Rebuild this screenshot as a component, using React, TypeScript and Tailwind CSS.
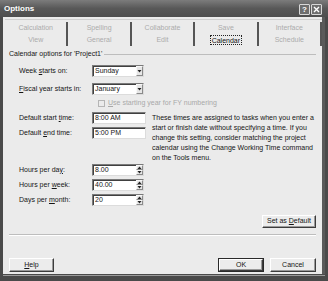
import React from "react"

const field =
  "bg-white border border-t-[#7a7a7a] border-l-[#7a7a7a] border-r-[#dcdcdc] border-b-[#dcdcdc] shadow-[inset_1px_1px_0_#404040]"
const raised =
  "bg-[#ececec] border border-t-white border-l-white border-r-[#3c3c3c] border-b-[#3c3c3c] shadow-[inset_-1px_-1px_0_#9a9a9a]"
const small = "bg-[#e6e6e6] border border-t-[#f8f8f8] border-l-[#f8f8f8] border-r-[#8a8a8a] border-b-[#8a8a8a]"

const Arrow = ({ up = false }: { up?: boolean }) => (
  <svg width="5" height="3" viewBox="0 0 5 3">
    <path d={up ? "M0.5 3 L2.5 0.5 L4.5 3 Z" : "M0.5 0 L4.5 0 L2.5 2.5 Z"} fill="#222" />
  </svg>
)

const Dropdown = ({ value }: { value: string }) => (
  <div className={`${field} w-[52px] h-[12px] flex items-center justify-between pl-[2px]`}>
    <span>{value}</span>
    <div className={`${small} w-[7px] h-[10px] flex items-center justify-center`}>
      <Arrow />
    </div>
  </div>
)

const Spin = ({ value }: { value: string }) => (
  <div className={`${field} w-[52px] h-[12px] flex items-center justify-between pl-[2px]`}>
    <span>{value}</span>
    <div className="w-[7px] h-[10px] flex flex-col">
      <div className={`${small} flex-1 flex items-center justify-center`}>
        <Arrow up />
      </div>
      <div className={`${small} flex-1 flex items-center justify-center`}>
        <Arrow />
      </div>
    </div>
  </div>
)

const tabs = [
  ["Calculation", "View"],
  ["Spelling", "General"],
  ["Collaborate", "Edit"],
  ["Save", "Calendar"],
  ["Interface", "Schedule"],
]

export default function App() {
  return (
    <div className="w-[328px] h-[281px] bg-[#4a4a4a] flex flex-col font-['Liberation_Sans',Arial,sans-serif] text-[7px] text-[#151515] overflow-hidden">
      {/* title bar */}
      <div className="h-[17px] shrink-0 flex items-center justify-between pl-[4px] pr-[6px] bg-gradient-to-b from-[#7c7c7c] via-[#585858] to-[#4e4e4e]">
        <span className="text-white text-[8px] font-semibold">Options</span>
        <div className="flex gap-[1px] mt-[2px]">
          <div className="w-[11px] h-[11px] border border-[#d8d8d8] bg-[#6e6e6e] rounded-[1px] flex items-center justify-center text-white text-[8px] font-bold leading-none">
            ?
          </div>
          <div className="w-[11px] h-[11px] border border-[#d8d8d8] bg-[#6e6e6e] rounded-[1px] flex items-center justify-center">
            <svg width="7" height="7" viewBox="0 0 7 7">
              <path d="M1 1 L6 6 M6 1 L1 6" stroke="#fff" strokeWidth="1.4" />
            </svg>
          </div>
        </div>
      </div>

      {/* dialog body */}
      <div className="h-[257px] shrink-0 mx-[3px] bg-[#ebebeb] border-r-[3px] border-[#5a5a5a] flex flex-col">
        {/* tabs */}
        <div className="ml-[2px] mt-[2px] w-[317px] border-t border-[#cfcfcf] pt-[2px] grid grid-cols-5">
          {tabs.map(([top, bottom]) => (
            <div key={top} className="flex flex-col border-r-2 border-[#555]">
              <div className="h-[12px] flex items-center justify-center text-[#ababab]">{top}</div>
              <div className="h-[12px] flex items-center justify-center">
                {bottom === "Calendar" ? (
                  <span className="px-[1px] h-[10px] leading-[9px] border border-dotted border-[#222] text-[#111]">
                    {bottom}
                  </span>
                ) : (
                  <span className="text-[#ababab]">{bottom}</span>
                )}
              </div>
            </div>
          ))}
        </div>

        {/* panel */}
        <div className="flex flex-col pl-[6px] pr-[6px]">
          <div className="h-[10px] mt-[3px] flex items-center">
            <span>Calendar options for 'Project1'</span>
            <div className="flex-1 ml-[2px] border-t border-[#bdbdbd]" />
          </div>

          <div className="pl-[10px] flex flex-col">
            <div className="mt-[6px] flex items-center">
              <span className="w-[73px]">
                Week <u>s</u>tarts on:
              </span>
              <Dropdown value="Sunday" />
            </div>
            <div className="mt-[6px] flex items-center">
              <span className="w-[73px]">
                <u>F</u>iscal year starts in:
              </span>
              <Dropdown value="January" />
            </div>
            <div className="mt-[4px] h-[8px] flex items-center pl-[79px] text-[#a9a9a9]">
              <div className="w-[7px] h-[7px] border border-[#b5b5b5] bg-[#ebebeb] mr-[3px]" />
              <span>
                <u>U</u>se starting year for FY numbering
              </span>
            </div>

            <div className="mt-[5px] flex items-start">
              <div className="flex flex-col">
                <div className="flex items-center">
                  <span className="w-[73px]">
                    Default start <u>t</u>ime:
                  </span>
                  <div className={`${field} w-[54px] h-[12px] flex items-center pl-[2px]`}>8:00 AM</div>
                </div>
                <div className="mt-[3px] flex items-center">
                  <span className="w-[73px]">
                    Default <u>e</u>nd time:
                  </span>
                  <div className={`${field} w-[54px] h-[12px] flex items-center pl-[2px]`}>5:00 PM</div>
                </div>
              </div>
              <p className="ml-[6px] pt-[1px] w-[166px] leading-[10px]">
                These times are assigned to tasks when you enter a start or finish date without specifying a
                time. If you change this setting, consider matching the project calendar using the Change
                Working Time command on the Tools menu.
              </p>
            </div>

            <div className="mt-[1px] flex items-center">
              <span className="w-[73px]">
                Hours per da<u>y</u>:
              </span>
              <Spin value="8.00" />
            </div>
            <div className="mt-[3px] flex items-center">
              <span className="w-[73px]">
                Hours per <u>w</u>eek:
              </span>
              <Spin value="40.00" />
            </div>
            <div className="mt-[3px] flex items-center">
              <span className="w-[73px]">
                Days per <u>m</u>onth:
              </span>
              <Spin value="20" />
            </div>
          </div>

          <div className="mt-[9px] flex justify-end">
            <div className={`${raised} w-[54px] h-[13px] flex items-center justify-center`}>
              <span>
                Set as <u>D</u>efault
              </span>
            </div>
          </div>
          <div className="mt-[6px] border-t border-[#bdbdbd] border-b border-b-white" />

          <div className="mt-[22px] flex items-center">
            <div className={`${raised} w-[45px] h-[14px] flex items-center justify-center`}>
              <span>
                <u>H</u>elp
              </span>
            </div>
            <div className="flex-1" />
            <div className="w-[46px] h-[14px] border border-[#2a2a2a] flex">
              <div className={`${raised} flex-1 flex items-center justify-center`}>OK</div>
            </div>
            <div className={`${raised} ml-[6px] w-[46px] h-[14px] flex items-center justify-center`}>
              Cancel
            </div>
          </div>
        </div>
      </div>
      <div className="mx-[3px] mt-[1px] border-t border-[#9a9a9a]" />
    </div>
  )
}
